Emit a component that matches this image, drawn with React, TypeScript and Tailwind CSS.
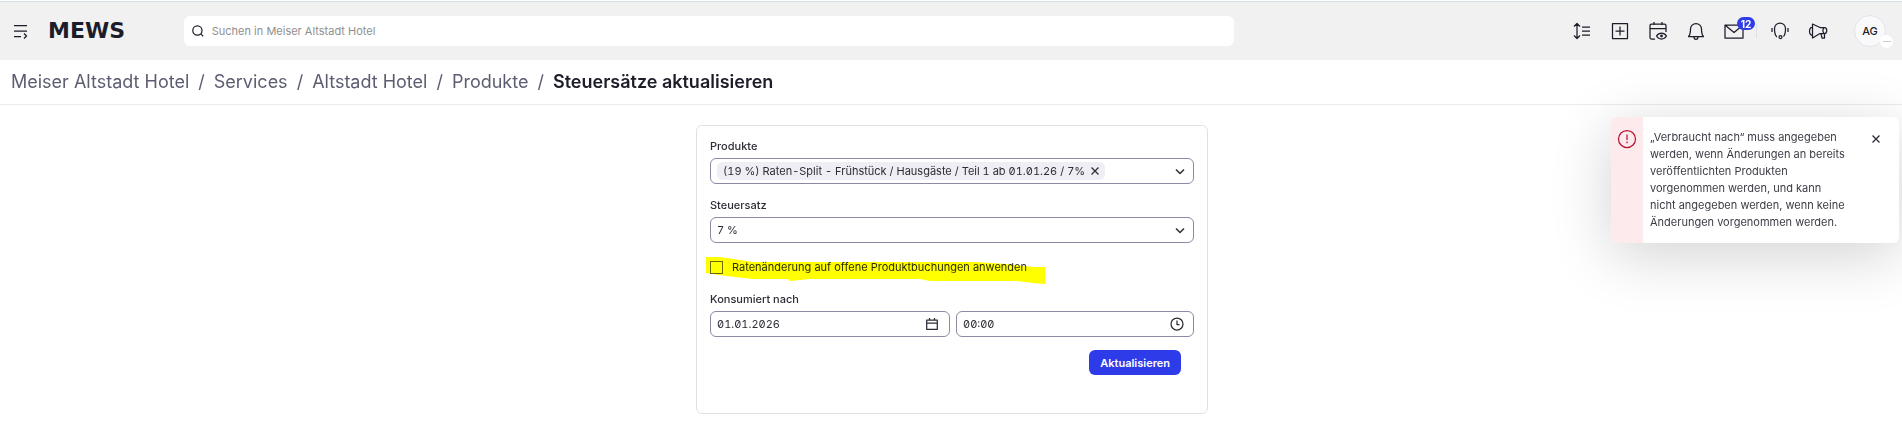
import React, { useState } from "react";

const crumbs = ["Meiser Altstadt Hotel", "Services", "Altstadt Hotel", "Produkte"];

interface IconProps {
  size?: number;
  className?: string;
  children: React.ReactNode;
}

function Icon({ size = 24, className = "", children }: IconProps) {
  return (
    <svg
      className={className}
      width={size}
      height={size}
      viewBox={`0 0 ${size} ${size}`}
      fill="none"
      stroke="currentColor"
      strokeWidth="1.25"
      strokeLinejoin="round"
      aria-hidden="true"
    >
      {children}
    </svg>
  );
}

function IconButton({ label, children }: { label: string; children: React.ReactNode }) {
  return (
    <button type="button" aria-label={label} className="relative flex h-6 w-6 items-center justify-center">
      {children}
    </button>
  );
}

function Chevron({ className = "" }: { className?: string }) {
  return (
    <Icon size={12} className={className}>
      <path d="M2 4.5 6 8.500l4-4" strokeWidth="1.5" />
    </Icon>
  );
}

function Cross() {
  return (
    <Icon size={10}>
      <path d="m1.500 1.500 7 7M8.500 1.500l-7 7" strokeWidth="1.3" />
    </Icon>
  );
}

function Header() {
  return (
    <header className="flex h-[59px] items-center border-t border-[#d3dfe3] bg-[#f1f1f1] pr-4 pl-3 text-[#1c1d29]">
      <button type="button" aria-label="Menü" className="flex h-6 w-6 items-center">
        <Icon size={18}>
          <path d="M2 3.5h13M2 9h13M2 14.5h7M12 11.5l2.500 2.500-2.500 2.500" />
        </Icon>
      </button>
      <a href="#" className="ml-3 w-[136px] font-['DejaVu_Sans',sans-serif] text-[22px] leading-6 font-bold">
        MEWS
      </a>
      <label className="flex h-[30px] w-[1050px] items-center gap-2 rounded-md bg-white px-2">
        <Icon size={12}>
          <circle cx="5.5" cy="5.5" r="4.7" />
          <path d="m9 9 2.5 2.5" />
        </Icon>
        <input
          type="text"
          aria-label="Suchen"
          placeholder="Suchen in Meiser Altstadt Hotel"
          className="w-full bg-transparent text-[11px] outline-none placeholder:text-[#8f8f8f]"
        />
      </label>
      <div className="ml-auto flex items-center gap-3.5">
        <IconButton label="Sortierung">
          <Icon>
            <path d="M7 4.500v15M4 7.500l3-3 3 3M4 16.500l3 3 3-3M12 8h8M12 12h8M12 16h8" />
          </Icon>
        </IconButton>
        <IconButton label="Neu">
          <Icon>
            <path d="M4.500 4.500h15v15h-15zM12 7.500v9M7.500 12h9" />
          </Icon>
        </IconButton>
        <IconButton label="Kalender">
          <Icon>
            <path d="M9 20H5.500a1.500 1.500 0 0 1-1.500-1.500V6.500A1.500 1.500 0 0 1 5.500 5h13A1.500 1.500 0 0 1 20 6.500V13M4 9.500h16M8 3v3M16 3v3" />
            <path d="M10.500 17c2.500-4 7.500-4 10 0-2.500 4-7.500 4-10 0Z" />
            <circle cx="15.500" cy="17" r=".8" />
          </Icon>
        </IconButton>
        <IconButton label="Benachrichtigungen">
          <Icon>
            <path d="M4.500 17.500c2-2 2-3.500 2-7.500a5.500 5.500 0 0 1 11 0c0 4 0 5.500 2 7.500ZM10 18c0 3 4 3 4 0" />
          </Icon>
        </IconButton>
        <IconButton label="Nachrichten">
          <Icon>
            <path d="M3 6h18v13H3zM3.500 6.500 12 13.500l8.500-7" />
          </Icon>
          <span className="absolute -top-0.5 left-[15px] flex h-[13px] w-[18px] items-center justify-center rounded-full bg-[#2d3be8] text-[10px] font-bold text-white">
            12
          </span>
        </IconButton>
        <div className="-ml-1 flex items-center gap-[11px]">
          <span className="h-3.5 w-px bg-[#e0e0e4]" />
          <IconButton label="Hilfe">
            <Icon>
              <path d="M9 17.500H8.500C6.500 15.500 6.500 12 6.500 9.500a5.500 5.500 0 0 1 11 0c0 2.500 0 6-2 8M4 9v4M20 9v4" />
              <circle cx="12.500" cy="18" r="1.500" />
            </Icon>
          </IconButton>
        </div>
        <IconButton label="Neuigkeiten">
          <Icon>
            <path d="M6.500 8.500V16M6.500 8.500c-4-1-4 8.500 0 7.500M6.500 8.500V5L14 8.500h4.500c3 0 3 6 0 6H14L6.500 19v-3M15 14.500l1 4.500h2.500v-4.500M18 8.500c-1.500 2-1.500 4 0 6" />
          </Icon>
        </IconButton>
        <button
          type="button"
          className="relative ml-2.5 flex h-8 w-8 items-center justify-center rounded-full border border-[#e2e2e8] bg-[#f9f9fb] text-[11px] font-medium"
        >
          AG
          <span className="absolute -right-2 -bottom-0.5 flex h-[13px] w-[13px] items-center justify-center rounded-full bg-white">
            <span className="h-px w-2 bg-[#cfcfcf]" />
          </span>
        </button>
      </div>
    </header>
  );
}

function Breadcrumbs() {
  return (
    <nav className="flex h-[45px] items-center gap-[9px] border-b border-[#ebebed] px-[11px] text-lg text-[#5c5d72]">
      {crumbs.map((crumb) => (
        <React.Fragment key={crumb}>
          <a href="#">{crumb}</a>
          <span>/</span>
        </React.Fragment>
      ))}
      <h1 className="font-semibold text-[#1c1d29]">Steuersätze aktualisieren</h1>
    </nav>
  );
}

function Field({ id, label, children }: { id: string; label: string; children: React.ReactNode }) {
  return (
    <div className="flex flex-col gap-1">
      <label htmlFor={id} className="font-medium">
        {label}
      </label>
      {children}
    </div>
  );
}

const boxClass = "flex h-[26px] items-center rounded-md border border-[#8b8aa3] bg-white";

function UpdateForm() {
  const [apply, setApply] = useState(false);

  return (
    <form
      className="flex w-[512px] flex-col gap-[13px] rounded-md border border-[#e0e0e6] bg-white px-[13px] pt-3 pb-[38px]"
      onSubmit={(e) => e.preventDefault()}
    >
      <Field id="products" label="Produkte">
        <div className={`${boxClass} justify-between pr-[7px] pl-1.5`}>
          <span className="flex h-[18px] items-center gap-[5px] rounded-md bg-[#efeef5] pr-[5px] pl-1.5 slashed-zero tabular-nums">
            (19 %) Raten-Split - Frühstück / Hausgäste / Teil 1 ab 01.01.26 / 7%
            <button type="button" aria-label="Entfernen">
              <Cross />
            </button>
          </span>
          <button type="button" id="products" aria-label="Produkte">
            <Chevron />
          </button>
        </div>
      </Field>

      <Field id="tax" label="Steuersatz">
        <div className="relative">
          <select id="tax" className={`${boxClass} w-full appearance-none px-1.5 tabular-nums`}>
            <option>7 %</option>
          </select>
          <Chevron className="pointer-events-none absolute top-[7px] right-2" />
        </div>
      </Field>

      <div className="relative flex h-[22px] items-center">
        <label className="flex items-center gap-[9px]">
          <input
            type="checkbox"
            className="h-[13px] w-[13px] appearance-none border border-[#6b6b80] bg-white checked:bg-[#2d3be8]"
            checked={apply}
            onChange={() => setApply(!apply)}
          />
          Ratenänderung auf offene Produktbuchungen anwenden
        </label>
        {/* marker stroke */}
        <svg
          className="pointer-events-none absolute top-0 -left-1 mix-blend-multiply"
          width="340"
          height="30"
          aria-hidden="true"
        >
          <path
            d="M0 1 14 1 34 4 47 6H270L300 8 327 11H339V28L327 27 311 25H224L214 23H104L84 25 82 23H47L20 20 0 17Z"
            fill="#ffff00"
          />
        </svg>
      </div>

      <Field id="date" label="Konsumiert nach">
        <div className="flex gap-1.5 slashed-zero tabular-nums">
          <div className={`${boxClass} flex-1 pr-[11px] pl-1.5`}>
            <input id="date" type="text" defaultValue="01.01.2026" className="min-w-0 flex-1 outline-none" />
            <Icon size={12}>
              <path d="M.7 2h10.600v9.300H.7zM.7 5h10.600M3.500 0v2M8.500 0v2" />
            </Icon>
          </div>
          <div className={`${boxClass} flex-1 pr-[9px] pl-1.5`}>
            <input
              type="text"
              aria-label="Uhrzeit"
              defaultValue="00:00"
              className="min-w-0 flex-1 outline-none"
            />
            <Icon size={14}>
              <circle cx="7" cy="7" r="6" />
              <path d="M7 3.500V7.500H9.500" />
            </Icon>
          </div>
        </div>
      </Field>

      <div className="flex justify-end pr-[13px]">
        <button type="submit" className="h-[25px] rounded-md bg-[#2d3be8] px-[11px] font-semibold text-white">
          Aktualisieren
        </button>
      </div>
    </form>
  );
}

function Toast() {
  return (
    <div
      role="alert"
      className="absolute top-[117px] right-[3px] flex w-[288px] overflow-hidden rounded-md bg-white shadow-[0_12px_60px_rgba(0,0,0,0.18)]"
    >
      <div className="flex w-8 shrink-0 justify-center bg-[#fdeaec] pt-3 text-[#b8142f]">
        <Icon size={20}>
          <circle cx="10" cy="10" r="8.500" />
          <path d="M10 5.500v5.500M10 12.500v1.700" />
        </Icon>
      </div>
      <p className="w-[205px] py-3 pl-[7px] leading-[17px] text-[#3b3c45]">
        „Verbraucht nach“ muss angegeben werden, wenn Änderungen an bereits veröffentlichten Produkten
        vorgenommen werden, und kann nicht angegeben werden, wenn keine Änderungen vorgenommen werden.
      </p>
      <button type="button" aria-label="Schließen" className="mt-[17px] mr-[18px] ml-auto h-2.5 w-2.5">
        <Cross />
      </button>
    </div>
  );
}

export default function App() {
  return (
    <div className="overflow-x-hidden pt-px font-['Inter',sans-serif] text-[11px] leading-4 text-[#2c2d36]">
      <Header />
      <Breadcrumbs />
      <main className="flex justify-center pt-5 pb-7 pl-0.5">
        <UpdateForm />
      </main>
      <Toast />
    </div>
  );
}
